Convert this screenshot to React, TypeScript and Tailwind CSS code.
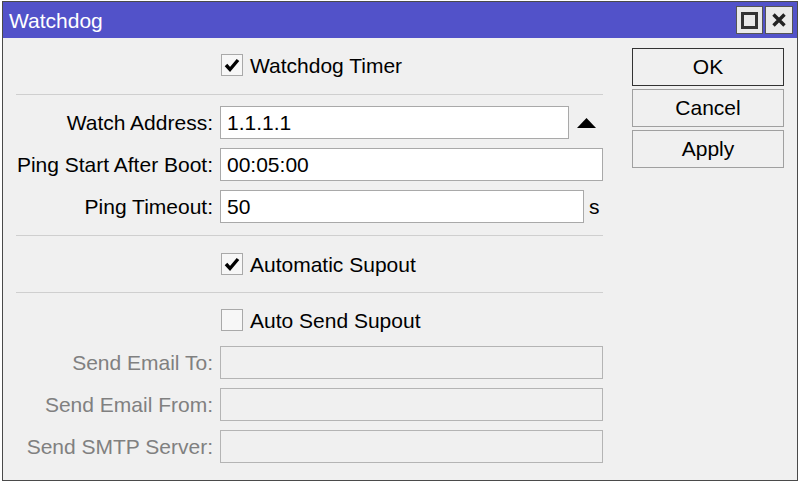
import React from "react";

const font = "font-['Liberation_Sans',Arial,sans-serif]";

function Check({ checked, label }: { checked: boolean; label: string }) {
  return (
    <div className="flex items-center h-[22px] ml-[218px]">
      <div className="w-[22px] h-[22px] border border-[#a9a9a9] bg-[#f7f7f7] flex items-center justify-center">
        {checked && (
          <svg width="16" height="16" viewBox="0 0 16 16">
            <path d="M2 8 L6 12.5 L14 3" fill="none" stroke="#000" strokeWidth="3.4" />
          </svg>
        )}
      </div>
      <span className="ml-[7px] text-[21px] text-black leading-none">{label}</span>
    </div>
  );
}

function Sep({ mt }: { mt: string }) {
  return <div className={`${mt} ml-[13px] w-[587px] h-px bg-[#cfcfcf]`} />;
}

function Field({
  label,
  value,
  width,
  disabled,
  after,
  mt,
}: {
  label: string;
  value?: string;
  width: string;
  disabled?: boolean;
  after?: React.ReactNode;
  mt: string;
}) {
  return (
    <div className={`flex items-center h-[33px] ${mt}`}>
      <div
        className={`w-[210px] text-right text-[21px] leading-none ${
          disabled ? "text-[#808080]" : "text-black"
        }`}
      >
        {label}
      </div>
      <div
        className={`${width} ml-[7px] h-[33px] border flex items-center pl-[6px] text-[21px] leading-none ${
          disabled ? "border-[#b4b4b4] bg-[#f0f0f0]" : "border-[#a9a9a9] bg-white text-black"
        }`}
      >
        {value}
      </div>
      {after}
    </div>
  );
}

function Btn({ label, primary }: { label: string; primary?: boolean }) {
  return (
    <div
      className={`w-[152px] h-[38px] border flex items-center justify-center text-[21px] text-black bg-[#f0f0f0] ${
        primary ? "border-[#333]" : "border-[#a0a0a0]"
      }`}
    >
      {label}
    </div>
  );
}

export default function App() {
  return (
    <div className={`w-[800px] h-[482px] bg-white pt-[1px] pl-[2px] pr-[2px] pb-[1px] ${font}`}>
      <div className="w-full h-full border border-[#4a4a4a] flex flex-col bg-[#f0f0f0]">
        <div className="h-[36px] bg-[#5252c9] flex items-center justify-between">
          <span className="ml-[6px] text-white text-[21px] leading-none">Watchdog</span>
          <div className="flex gap-[2px] mr-[4px]">
            <div className="w-[27px] h-[28px] bg-[#e9e9e9] border border-[#555] flex items-center justify-center">
              <div className="w-[17px] h-[17px] border-[3px] border-[#333]" />
            </div>
            <div className="w-[28px] h-[28px] bg-[#e9e9e9] border border-[#555] flex items-center justify-center">
              <svg width="16" height="16" viewBox="0 0 16 16">
                <path d="M2.5 2.5 L13.5 13.5 M13.5 2.5 L2.5 13.5" stroke="#222" strokeWidth="3.4" />
              </svg>
            </div>
          </div>
        </div>
        <div className="flex flex-1">
          <div className="w-[629px] flex flex-col">
            <div className="mt-[16px]">
              <Check checked label="Watchdog Timer" />
            </div>
            <Sep mt="mt-[18px]" />
            <Field
              mt="mt-[11px]"
              label="Watch Address:"
              value="1.1.1.1"
              width="w-[349px]"
              after={
                <svg className="ml-[8px]" width="19" height="10" viewBox="0 0 19 10">
                  <path d="M0 10 L9.5 0 L19 10 Z" fill="#000" />
                </svg>
              }
            />
            <Field mt="mt-[9px]" label="Ping Start After Boot:" value="00:05:00" width="w-[383px]" />
            <Field
              mt="mt-[9px]"
              label="Ping Timeout:"
              value="50"
              width="w-[364px]"
              after={<span className="ml-[5px] text-[21px] leading-none">s</span>}
            />
            <Sep mt="mt-[12px]" />
            <div className="mt-[17px]">
              <Check checked label="Automatic Supout" />
            </div>
            <Sep mt="mt-[17px]" />
            <div className="mt-[16px]">
              <Check checked={false} label="Auto Send Supout" />
            </div>
            <Field mt="mt-[15px]" label="Send Email To:" disabled width="w-[383px]" />
            <Field mt="mt-[9px]" label="Send Email From:" disabled width="w-[383px]" />
            <Field mt="mt-[9px]" label="Send SMTP Server:" disabled width="w-[383px]" />
          </div>
          <div className="flex flex-col gap-[3px] pt-[10px]">
            <Btn label="OK" primary />
            <Btn label="Cancel" />
            <Btn label="Apply" />
          </div>
        </div>
      </div>
    </div>
  );
}
